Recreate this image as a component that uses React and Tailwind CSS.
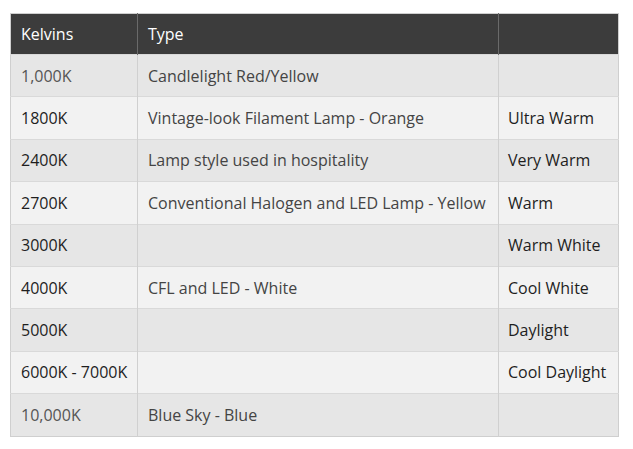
const rows = [
  { k: '1,000K', t: 'Candlelight Red/Yellow', n: '', dim: true },
  { k: '1800K', t: 'Vintage-look Filament Lamp - Orange', n: 'Ultra Warm' },
  { k: '2400K', t: 'Lamp style used in hospitality', n: 'Very Warm' },
  { k: '2700K', t: 'Conventional Halogen and LED Lamp - Yellow', n: 'Warm' },
  { k: '3000K', t: '', n: 'Warm White' },
  { k: '4000K', t: 'CFL and LED - White', n: 'Cool White' },
  { k: '5000K', t: '', n: 'Daylight' },
  { k: '6000K - 7000K', t: '', n: 'Cool Daylight' },
  { k: '10,000K', t: 'Blue Sky - Blue', n: '', dim: true },
];

export default function App() {
  return (
    <div className="w-[633px] h-[449px] bg-white pt-[13px] pl-[10px] font-['Open_Sans',sans-serif] text-[16px]">
      <table className="w-[608px] table-fixed border-collapse border border-[#cfcfcf]">
        <colgroup>
          <col className="w-[127px]" />
          <col className="w-[361px]" />
          <col className="w-[120px]" />
        </colgroup>
        <thead>
          <tr className="h-[41px] bg-[#3c3c3c] text-white">
            <th className="text-left font-normal px-[10px] border-r border-[#6a6a6a]">Kelvins</th>
            <th className="text-left font-normal px-[10px] border-r border-[#6a6a6a]">Type</th>
            <th></th>
          </tr>
        </thead>
        <tbody>
          {rows.map((r, i) => (
            <tr key={r.k} className={`h-[42.4px] border-t border-[#d9d9d9] ${i % 2 === 0 ? 'bg-[#e6e6e6]' : 'bg-[#f2f2f2]'}`}>
              <td className={`px-[10px] border-r border-[#d0d0d0] whitespace-nowrap ${r.dim ? 'text-[#555]' : 'text-[#1e1e1e] font-medium'}`}>{r.k}</td>
              <td className="px-[10px] border-r border-[#d0d0d0] text-[#444] whitespace-nowrap">{r.t}</td>
              <td className="px-[9px] text-[#1e1e1e] font-medium whitespace-nowrap">{r.n}</td>
            </tr>
          ))}
        </tbody>
      </table>
    </div>
  );
}
